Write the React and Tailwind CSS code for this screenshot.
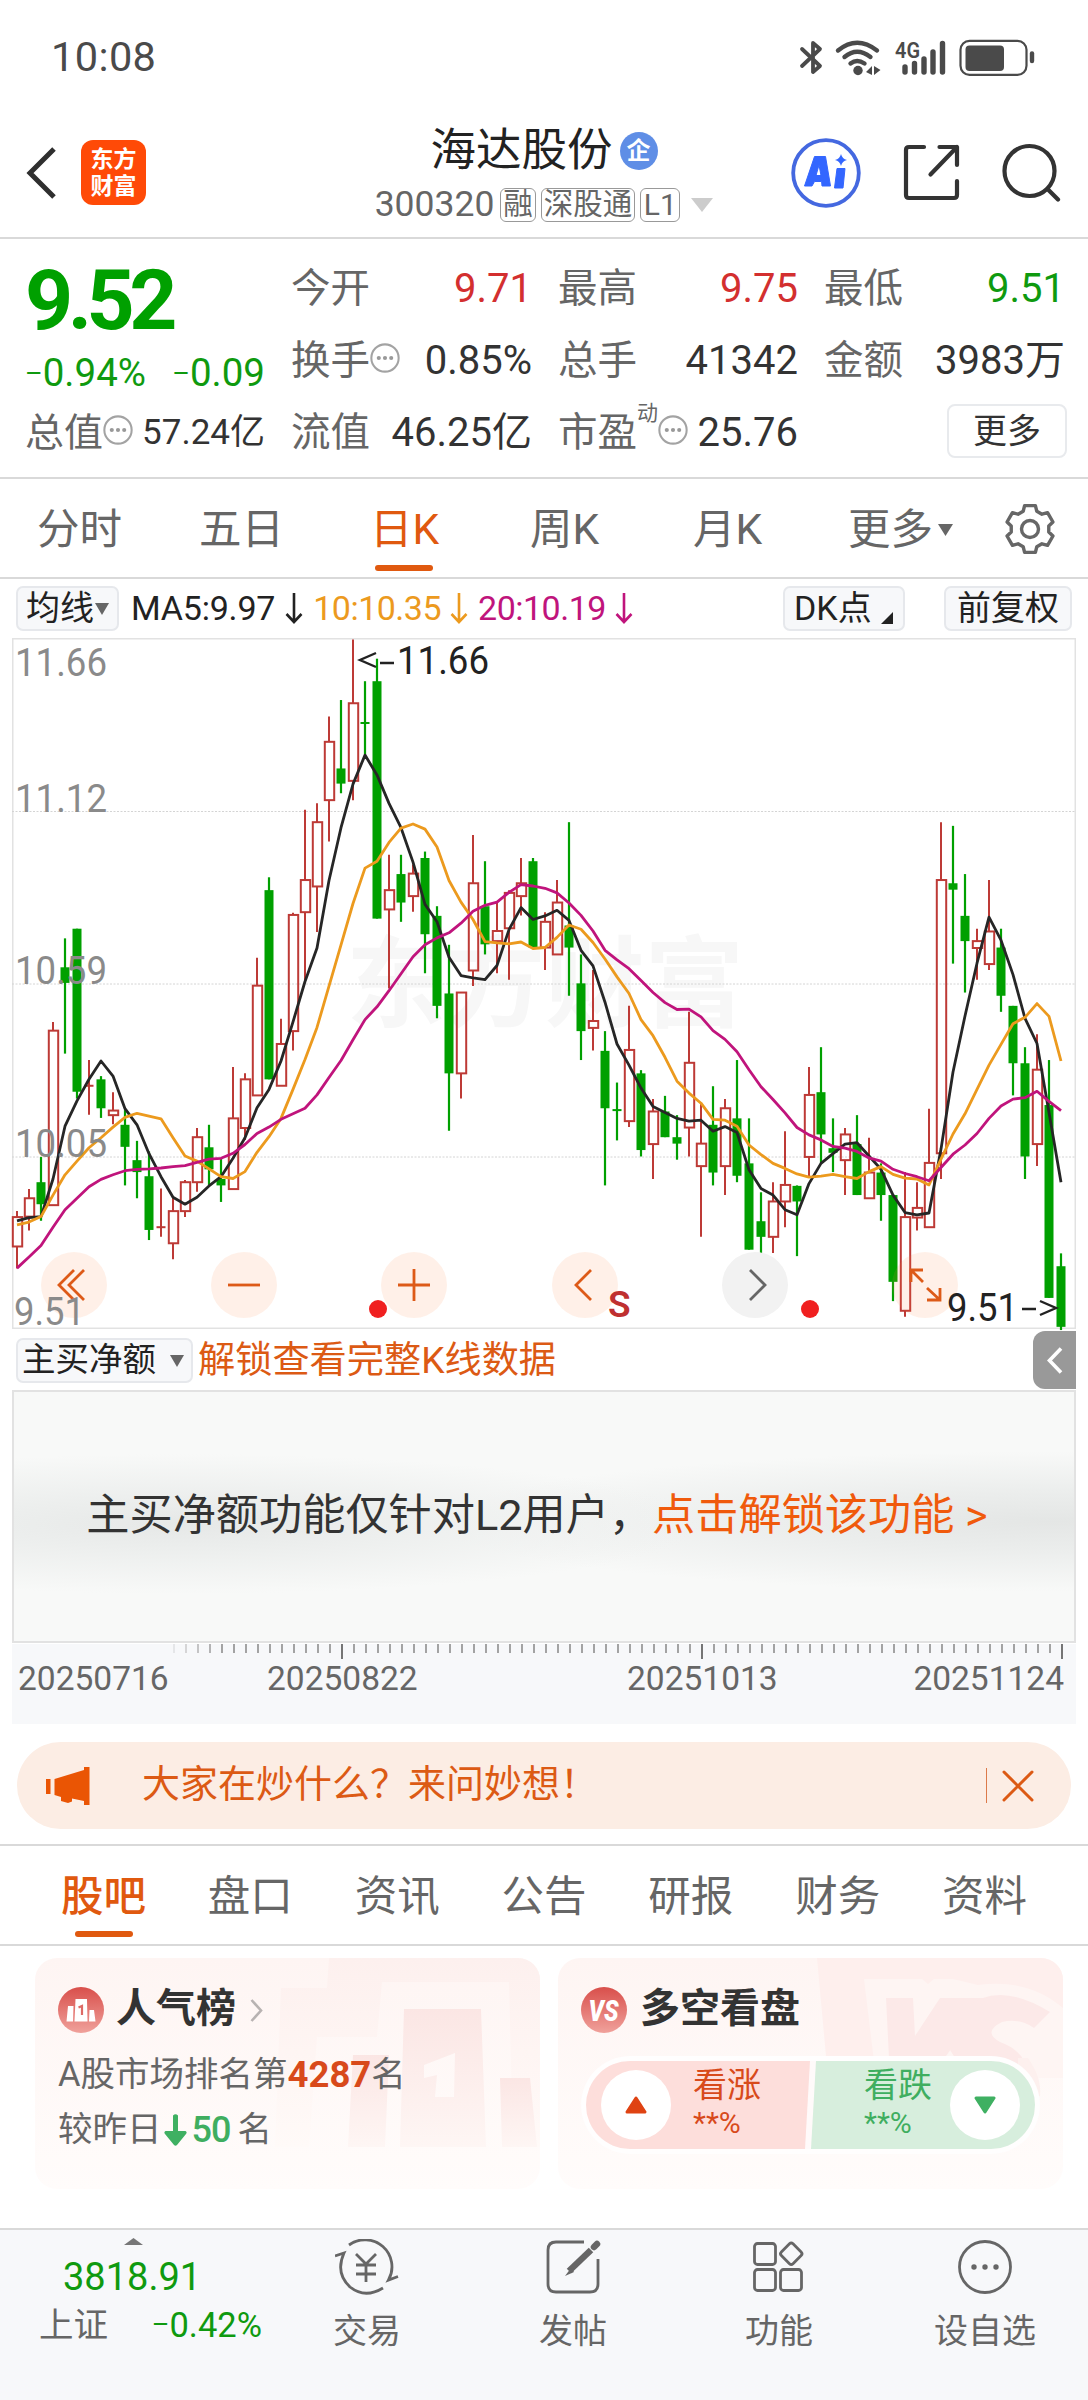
import React from 'react';

// [high, bodyTop, bodyBottom, low, direction], 1 = up, 0 = down
const candles = [
    [1265, 1278, 1342, 1390, 1], [1217, 1237, 1277, 1307, 1], [1147, 1202, 1250, 1286, 0], [853, 872, 1252, 1252, 1],
    [671, 734, 768, 922, 0], [650, 650, 1005, 1020, 0], [936, 992, 992, 1055, 1], [971, 978, 1041, 1062, 0],
    [1006, 1046, 1056, 1076, 1], [1045, 1077, 1125, 1209, 0], [1112, 1154, 1180, 1237, 0], [1135, 1189, 1306, 1328, 0],
    [1216, 1300, 1300, 1321, 1], [1235, 1265, 1335, 1370, 1], [1197, 1202, 1265, 1278, 1], [1084, 1104, 1202, 1223, 1],
    [1077, 1126, 1174, 1208, 0], [1150, 1195, 1209, 1245, 0], [951, 1063, 1217, 1217, 1], [965, 978, 1084, 1110, 1],
    [713, 774, 1013, 1013, 1], [538, 566, 978, 978, 0], [846, 901, 992, 992, 1], [615, 620, 873, 915, 1],
    [391, 544, 614, 765, 1], [377, 418, 558, 657, 1], [188, 243, 370, 460, 1], [152, 301, 334, 355, 0],
    [20, 159, 328, 370, 1], [111, 202, 202, 270, 0], [62, 111, 628, 628, 0], [489, 566, 608, 780, 1],
    [489, 531, 593, 635, 0], [510, 530, 579, 613, 1], [482, 496, 662, 747, 0], [601, 622, 818, 845, 0],
    [685, 791, 965, 1090, 0], [788, 789, 965, 1020, 1], [446, 551, 741, 775, 1], [503, 601, 684, 706, 0],
    [593, 655, 677, 747, 1], [566, 572, 649, 761, 1], [496, 551, 579, 621, 1], [496, 503, 691, 691, 0],
    [614, 635, 691, 740, 1], [544, 593, 706, 706, 1], [418, 643, 691, 796, 0], [706, 769, 873, 936, 0],
    [740, 851, 866, 915, 1], [873, 916, 1041, 1209, 0], [985, 1045, 1045, 1111, 0], [818, 914, 1069, 1082, 1],
    [958, 965, 1132, 1146, 0], [1021, 1048, 1119, 1195, 1], [1014, 1048, 1104, 1104, 0], [1056, 1104, 1118, 1153, 0],
    [831, 942, 1083, 1146, 1], [1029, 1118, 1167, 1321, 1], [993, 1077, 1181, 1209, 0], [1021, 1041, 1167, 1230, 1],
    [936, 1063, 1188, 1202, 0], [1063, 1161, 1349, 1349, 0], [1224, 1287, 1321, 1377, 0], [1202, 1244, 1321, 1356, 1],
    [1091, 1208, 1244, 1300, 1], [1209, 1210, 1244, 1363, 0], [951, 1012, 1147, 1193, 1], [908, 1006, 1098, 1161, 0],
    [1063, 1128, 1138, 1180, 0], [1084, 1098, 1154, 1230, 1], [1056, 1119, 1230, 1230, 0], [1105, 1181, 1237, 1237, 1],
    [1161, 1181, 1230, 1286, 0], [1230, 1230, 1419, 1461, 0], [1180, 1278, 1482, 1495, 1], [1202, 1258, 1279, 1307, 1],
    [1042, 1160, 1300, 1300, 1], [418, 544, 1139, 1195, 1], [426, 551, 565, 726, 0], [531, 622, 677, 789, 0],
    [650, 677, 692, 761, 1], [544, 656, 727, 740, 1], [650, 691, 796, 831, 0], [818, 818, 943, 1013, 0],
    [908, 943, 1146, 1195, 0], [880, 957, 1119, 1167, 1], [936, 1034, 1454, 1454, 0], [1357, 1385, 1517, 1524, 0],
];

const ma5 = [
    1286, 1279, 1277, 1195, 1080, 1025, 978, 938, 971, 1042, 1077, 1140, 1190, 1235, 1250, 1235, 1210, 1190, 1150, 1105, 1040, 1000,
    938, 853, 765, 692, 545, 430, 335, 272, 315, 377, 430, 505, 597, 635, 712, 752, 757, 761, 730, 652, 604, 630, 622, 610, 632, 697,
    731, 810, 901, 947, 997, 1037, 1050, 1063, 1069, 1067, 1091, 1081, 1094, 1175, 1216, 1230, 1262, 1273, 1205, 1161, 1140, 1119,
    1116, 1145, 1174, 1230, 1268, 1273, 1269, 1130, 962, 840, 725, 625, 675, 750, 845, 900, 1050, 1202,
];
const ma10 = [
    1295, 1289, 1277, 1230, 1186, 1156, 1127, 1105, 1082, 1061, 1052, 1058, 1064, 1105, 1145, 1156, 1173, 1190, 1194, 1179, 1137,
    1103, 1063, 1000, 935, 865, 775, 685, 595, 518, 503, 462, 431, 422, 433, 472, 545, 592, 630, 678, 681, 683, 679, 693, 691, 669,
    642, 651, 680, 716, 755, 791, 848, 883, 930, 982, 1008, 1030, 1065, 1067, 1080, 1121, 1142, 1161, 1172, 1184, 1191, 1189, 1185,
    1190, 1194, 1179, 1168, 1185, 1193, 1195, 1208, 1152, 1097, 1053, 1000, 947, 902, 857, 843, 813, 841, 938,
];
const ma20 = [
    1389, 1365, 1340, 1300, 1262, 1237, 1212, 1196, 1186, 1177, 1174, 1173, 1171, 1168, 1166, 1159, 1152, 1150, 1139, 1120, 1096,
    1082, 1065, 1053, 1041, 1012, 974, 937, 892, 848, 820, 785, 748, 711, 685, 670, 659, 638, 612, 599, 592, 571, 554, 557, 562, 572,
    594, 621, 655, 697, 718, 737, 763, 789, 811, 826, 825, 842, 872, 891, 918, 957, 994, 1022, 1051, 1083, 1099, 1110, 1124, 1128,
    1135, 1149, 1156, 1174, 1183, 1190, 1199, 1170, 1141, 1121, 1096, 1063, 1036, 1021, 1018, 1004, 1026, 1046,
];

const px = (i) => 5 + i * 12;
const py = (v) => (v - 18) * 0.4592 + 0.5;
const toPoints = (list) => list.map((v, i) => `${px(i)},${py(v).toFixed(1)}`).join(' ');

const StatusBar = () => (
    <div className="flex h-[115px] items-center justify-between pl-[51px] pr-[52px] text-[#4a4a4a]">
        <span className="text-[41.5px] tracking-[0.4px]">10:08</span>
        <svg className="overflow-visible" width="236" height="38" viewBox="0 0 236 38" fill="none" stroke="#4a4a4a">
            <path d="M2 10L20 27L13 33V4L20 10L2 27" strokeWidth="3.800" strokeLinecap="round" strokeLinejoin="round" />
            <g strokeWidth="4.400" strokeLinecap="round">
                <path d="M38 11.500Q57 -4 77 11.500" />
                <path d="M44.500 18Q57 7.500 70.500 18" />
                <path d="M50.500 24.500Q57 19.500 64.500 24.500" />
            </g>
            <circle cx="58" cy="31.500" r="4.700" fill="#4a4a4a" stroke="none" />
            <path d="M72 27V36L66 33ZM74 27L80.500 31L74 36Z" fill="#4a4a4a" stroke="none" />
            <g strokeWidth="5.400" strokeLinecap="round">
                <path d="M105 28V33M114.500 24.500V33M124 20V33M133 13V33M142.500 4.500V33" />
            </g>
            <text x="95" y="19" fontSize="22" fontWeight="600" fill="#4a4a4a" stroke="none" textLength="25" lengthAdjust="spacingAndGlyphs">4G</text>
            <rect x="160.500" y="1.800" width="66" height="34" rx="9" strokeWidth="2.200" />
            <rect x="165.500" y="6.500" width="38.500" height="25.500" rx="4" fill="#4a4a4a" stroke="none" />
            <path d="M232 14.500V22" strokeWidth="4.400" strokeLinecap="round" />
        </svg>
    </div>
);

const Header = () => (
    <div className="grid h-[124px] grid-cols-[300px_1fr_300px] border-b-2 border-[#d9d9d9]">
        <div className="flex h-[115px] items-center gap-[25px] pl-[26px]">
            <svg width="30" height="52" viewBox="0 0 30 52" fill="none" stroke="#2f2f2f" strokeWidth="5">
                <path d="M28 2L4 26L28 50" />
            </svg>
            <div className="flex h-[65px] w-[65px] flex-col items-center justify-center rounded-[12px] bg-[#ff4a07] text-[23px] leading-[27px] font-bold text-white">
                <span>东方</span>
                <span>财富</span>
            </div>
        </div>
        <div className="flex flex-col items-center pt-[11px]">
            <div className="flex h-[50px] items-center gap-[7px]">
                <span className="text-[45.5px] text-[#222]">海达股份</span>
                <span className="flex h-[38px] w-[38px] items-center justify-center rounded-full bg-[#5f8ee6] text-[24px] font-bold text-white">企</span>
            </div>
            <div className="mt-[11px] flex h-[36px] items-center text-[#666]">
                <span className="text-[35.5px]">300320</span>
                <span className="ml-[6px] flex h-[34px] items-center rounded-[6px] border-[1.5px] border-[#999] px-[2px] text-[29.5px] leading-none">融</span>
                <span className="ml-[5px] flex h-[34px] items-center rounded-[6px] border-[1.5px] border-[#999] px-[2px] text-[29.5px] leading-none">深股通</span>
                <span className="ml-[5px] flex h-[34px] w-[40px] items-center justify-center rounded-[6px] border-[1.5px] border-[#999] text-[30px] leading-none">L1</span>
                <svg className="ml-[11px]" width="22" height="14" viewBox="0 0 22 14">
                    <path d="M0 0H22L11 14Z" fill="#ccc" />
                </svg>
            </div>
        </div>
        <div className="flex h-[115px] items-center justify-end gap-[42px] pr-[27px]">
            <svg width="70" height="70" viewBox="0 0 70 70">
                <circle cx="35" cy="35" r="32.800" fill="none" stroke="#4468e0" strokeWidth="3.800" />
                <g fill="#3366ff">
                    <path fillRule="evenodd" d="M23.500 18.500H34.500L39.500 48H31L30.600 43.500H23.500L21 48H13.500ZM28 27L25 37.500H30Z" strokeLinejoin="round" stroke="#3366ff" strokeWidth="1" />
                    <path d="M46 30.500H54L52 50H43.500Z" strokeLinejoin="round" stroke="#3366ff" strokeWidth="1" />
                    <path d="M50 16Q51.200 20.800 56 22Q51.200 23.200 50 28Q48.800 23.200 44 22Q48.800 20.800 50 16Z" />
                </g>
            </svg>
            <svg width="57" height="57" viewBox="0 0 57 57" fill="none" stroke="#333" strokeWidth="4.200" strokeLinecap="round" strokeLinejoin="round">
                <path d="M21 3H6Q3 3 3 6V51Q3 54 6 54H51Q54 54 54 51V37" />
                <path d="M36.500 3H54V21M54 3L27.500 30.500" />
            </svg>
            <svg width="59" height="59" viewBox="0 0 59 59" fill="none" stroke="#333" strokeWidth="4.200" strokeLinecap="round">
                <circle cx="27.500" cy="28" r="25" />
                <path d="M45.500 46L56 56.500" />
            </svg>
        </div>
    </div>
);

const DotsIcon = () => (
    <svg className="-mt-[6px] shrink-0" width="30" height="30" viewBox="0 0 29 29">
        <circle cx="14.500" cy="14.500" r="13.200" fill="none" stroke="#a3a3a3" strokeWidth="2" />
        <g fill="#999">
            <circle cx="8.500" cy="14.500" r="2" />
            <circle cx="14.500" cy="14.500" r="2" />
            <circle cx="20.500" cy="14.500" r="2" />
        </g>
    </svg>
);

const Stat = ({ label, value, tone = 'text-[#333]', dots, sup }) => (
    <div className="flex h-[72px] items-center">
        <span className="text-[39.5px] text-[#666]">{label}</span>
        {sup && <span className="-mt-[38px] text-[21px] text-[#666]">{sup}</span>}
        {dots && <DotsIcon />}
        <span className={`ml-auto text-[40px] ${tone}`}>{value}</span>
    </div>
);

const Negative = ({ children }) => (
    <span><span className="text-[27px] align-[3px]">–</span>{children}</span>
);

const Quote = () => (
    <div className="grid h-[240px] grid-cols-[240px_241px_240px_241px] gap-x-[26px] border-b-2 border-[#d9d9d9] pl-[25px] pt-[14px] whitespace-nowrap">
        <div>
            <div className="h-[96px] text-[84px] leading-[96px] font-bold tracking-[-5.5px] text-[#00a000]">9.52</div>
            <div className="flex h-[48px] items-center justify-between text-[38.5px] text-[#0f9a0f]">
                <Negative>0.94%</Negative>
                <Negative>0.09</Negative>
            </div>
            <div className="flex h-[72px] items-center">
                <span className="text-[39px] text-[#666]">总值</span>
                <DotsIcon />
                <span className="ml-auto text-[35px] text-[#333]">57.24亿</span>
            </div>
        </div>
        <div>
            <Stat label="今开" value="9.71" tone="text-[#d32f2f]" />
            <Stat label="换手" value="0.85%" dots />
            <Stat label="流值" value="46.25亿" />
        </div>
        <div>
            <Stat label="最高" value="9.75" tone="text-[#d32f2f]" />
            <Stat label="总手" value="41342" />
            <Stat label="市盈" value="25.76" sup="动" dots />
        </div>
        <div>
            <Stat label="最低" value="9.51" tone="text-[#0f9a0f]" />
            <Stat label="金额" value="3983万" />
            <div className="flex h-[68px] items-center justify-end">
                <button className="-mr-[2px] flex h-[54px] w-[120px] items-center justify-center rounded-[8px] border-2 border-[#e8eaed] text-[34px] text-[#333]">更多</button>
            </div>
        </div>
    </div>
);

// six-tooth cog outline
const gearPath = Array.from({ length: 6 }, (_, k) => {
    const pt = (deg, r) => {
        const a = ((k * 60 + deg - 90) * Math.PI) / 180;
        return `${(26 + r * Math.cos(a)).toFixed(2)} ${(26 + r * Math.sin(a)).toFixed(2)}`;
    };
    return `${k ? 'L' : 'M'}${pt(-21, 19)}L${pt(-13, 24)}L${pt(13, 24)}L${pt(21, 19)}`;
}).join('') + 'Z';

const PeriodTabs = () => (
    <div className="flex h-[100px] items-center border-b-2 border-[#d9d9d9] pt-[4px] pl-[37px] text-[42.5px] text-[#666] whitespace-nowrap">
        <span className="w-[162px]">分时</span>
        <span className="w-[171px]">五日</span>
        <span className="relative w-[160px] text-[#e0590f]">
            日K
            <i className="absolute -bottom-[9px] left-[5px] h-[6px] w-[58px] rounded-full bg-[#e0590f]" />
        </span>
        <span className="w-[163px]">周K</span>
        <span className="w-[155px]">月K</span>
        <span>更多</span>
        <svg className="ml-[5px]" width="15" height="12" viewBox="0 0 15 12"><path d="M0 0H15L7.500 12Z" fill="#666" /></svg>
        <svg className="-mt-[2px] ml-[51px]" width="52" height="52" viewBox="0 0 52 52" fill="none" stroke="#666" strokeWidth="3.400" strokeLinejoin="round">
            <path d={gearPath} />
            <circle cx="26" cy="26" r="8.500" />
        </svg>
    </div>
);

const DownArrow = ({ color }) => (
    <svg width="18" height="31" viewBox="0 0 18 31" fill="none" stroke={color} strokeWidth="2.600">
        <path d="M9 0V29M1.500 21L9 29L16.500 21" />
    </svg>
);

const IndicatorRow = () => (
    <div className="flex h-[59px] items-center pl-[16px] pr-[16px] text-[34px] text-[#222] whitespace-nowrap">
        <button className="flex h-[45px] w-[103px] items-center justify-center gap-px rounded-[7px] border-2 border-[#e6e8ec] bg-[#f7f8fa]">
            均线
            <svg width="14" height="12" viewBox="0 0 14 12"><path d="M0 0H14L7 12Z" fill="#666" /></svg>
        </button>
        <span className="ml-[12px] mr-[10px] tracking-[-0.2px]">MA5:9.97</span>
        <DownArrow color="#222" />
        <span className="ml-[10px] mr-[9px] tracking-[-0.5px] text-[#ec9a1e]">10:10.35</span>
        <DownArrow color="#ec9a1e" />
        <span className="ml-[10px] mr-[9px] tracking-[-0.5px] text-[#c0147c]">20:10.19</span>
        <DownArrow color="#c0147c" />
        <button className="ml-auto flex h-[45px] w-[122px] items-center rounded-[7px] border-2 border-[#e6e8ec] bg-[#f7f8fa] pl-[9px]">
            DK点
            <svg className="mt-[18px] ml-[9px]" width="12" height="12" viewBox="0 0 12 12"><path d="M12 0V12H0Z" fill="#222" /></svg>
        </button>
        <button className="ml-[39px] flex h-[45px] w-[128px] items-center justify-center rounded-[7px] border-2 border-[#e6e8ec] bg-[#f7f8fa]">前复权</button>
    </div>
);

const axisLabels = [
    { text: '11.66', y: 38, w: 92 },
    { text: '11.12', y: 174, w: 92 },
    { text: '10.59', y: 346, w: 92 },
    { text: '10.05', y: 519, w: 92 },
];

const KLineChart = () => (
    <svg className="ml-[12px] block shrink-0 overflow-visible" width="1064" height="691" viewBox="0 0 1064 691">
        <rect x="0.750" y="0.750" width="1062.500" height="689.500" fill="none" stroke="#e2e2e2" strokeWidth="1.500" />
        <text x="334" y="381" fontSize="99" fontWeight="700" fill="#f7f7f7" textLength="398" lengthAdjust="spacingAndGlyphs">东方财富</text>
        {[173.500, 346, 519].map((y) => (
            <line key={y} x1="0" x2="1063" y1={y} y2={y} stroke="#d4d4d4" strokeWidth="1" strokeDasharray="2 1.500" />
        ))}
        {candles.map(([h, t, b, l, up], i) => {
            const x = px(i);
            if (!up) {
                return (
                    <g key={i} fill="#00a000">
                        <rect x={x - 1.1} y={py(h)} width="2.200" height={py(l) - py(h)} />
                        <rect x={x - 4.5} y={py(t) - (t === b ? 1 : 0)} width="9" height={Math.max(py(b) - py(t), 2)} />
                    </g>
                );
            }
            return (
                <g key={i} fill="none" stroke="#bd3a36" strokeWidth="2">
                    <path d={`M${x} ${py(h)}V${py(t)}M${x} ${py(b)}V${py(l)}`} />
                    {t === b
                        ? <path d={`M${x - 4.5} ${py(t)}H${x + 4.5}`} />
                        : <rect x={x - 4.2} y={py(t)} width="9.400" height={py(b) - py(t)} />}
                </g>
            );
        })}
        <g fill="none" strokeWidth="2.800" strokeLinejoin="round">
            <polyline points={toPoints(ma5)} stroke="#262626" />
            <polyline points={toPoints(ma10)} stroke="#ec9a1e" />
            <polyline points={toPoints(ma20)} stroke="#c0147c" />
        </g>
        <g fill="#ff8040" fillOpacity="0.120">
            {[62, 232, 402, 573, 913].map((x) => <circle key={x} cx={x} cy="647" r="33" />)}
        </g>
        <circle cx="743" cy="647" r="33" fill="#f2f2f2" />
        <g fill="none" stroke="#dd5a18" strokeWidth="2.800">
            <path d="M62 632L47 647L62 662M72 632L57 647L72 662" />
            <path d="M216 647H248" />
            <path d="M386 647H418M402 631V663" />
            <path d="M579 632L564 647L579 662" />
            <path d="M911 644L899 632M899 644V632H911M915 650L928 662M915 662H928V650" />
        </g>
        <path d="M738 632L753 647L738 662" fill="none" stroke="#666" strokeWidth="2.800" />
        <circle cx="366" cy="671" r="9" fill="#f02020" />
        <circle cx="798" cy="671" r="9" fill="#f02020" />
        <text x="596" y="679" fontSize="37" fontWeight="600" fill="#bf3030">S</text>
        <g fontSize="39" fill="#8a8a8a">
            {axisLabels.map((a) => <text key={a.text} x="3" y={a.y} textLength={a.w} lengthAdjust="spacingAndGlyphs">{a.text}</text>)}
            <text x="2" y="687" textLength="71" lengthAdjust="spacingAndGlyphs">9.51</text>
        </g>
        <g fontSize="39" fill="#222">
            <text x="385" y="36" textLength="92" lengthAdjust="spacingAndGlyphs">11.66</text>
            <text x="935" y="683" textLength="71" lengthAdjust="spacingAndGlyphs">9.51</text>
        </g>
        <g fill="none" stroke="#222" strokeWidth="2.400">
            <path d="M364 15L348 22L364 29M368 25H382" />
            <path d="M1010 671H1024M1028 663L1044 670L1028 677" />
        </g>
    </svg>
);

const SubChartBar = () => (
    <div className="flex h-[61px] items-start pl-[16px] pr-[12px] pt-[2px] whitespace-nowrap">
        <button className="mt-[7px] flex h-[45px] w-[177px] items-center rounded-[7px] border-2 border-[#e6e8ec] bg-[#f7f8fa] pl-[4px] text-[33.5px] text-[#222]">
            主买净额
            <svg className="ml-[14px]" width="14" height="12" viewBox="0 0 14 12"><path d="M0 0H14L7 12Z" fill="#666" /></svg>
        </button>
        <span className="ml-[5px] flex h-[60px] items-center text-[37.2px] text-[#dc5a14]">解锁查看完整K线数据</span>
        <button className="ml-auto flex h-[58px] w-[43px] items-center justify-center rounded-l-[12px] bg-[#999]">
            <svg width="16" height="27" viewBox="0 0 16 27" fill="none" stroke="#fff" strokeWidth="3.600"><path d="M14 1.500L2.500 13.500L14 25.500" /></svg>
        </button>
    </div>
);

const LockedPanel = () => (
    <div className="mx-[12px] flex h-[253px] items-center justify-center border-2 border-[#e2e2e2] bg-[#f8f9f8] bg-[radial-gradient(ellipse_520px_70px_at_16%_53%,#e6e8e7_0%,#eceeed_35%,transparent_100%),radial-gradient(ellipse_620px_70px_at_98%_52%,#e4e6e5_0%,#ebedec_40%,transparent_100%)] pr-[14px] text-[43.2px] whitespace-nowrap">
        <span className="text-[#333]">主买净额功能仅针对L2用户，</span>
        <span className="text-[#f05a0c]">点击解锁该功能 &gt;</span>
    </div>
);

const TimeAxis = () => (
    <div className="mx-[12px] mt-px h-[80px] bg-[#f7f8fa]">
        <svg className="block" width="1064" height="16" viewBox="0 0 1064 16">
            {Array.from({ length: 75 }, (_, k) => {
                const i = k + 13;
                const major = i === 27 || i === 57 || i === 87;
                return (
                    <line key={i} x1={px(i) + 1} x2={px(i) + 1} y1="0" y2={major ? 15 : 9} stroke={major ? '#666' : '#999'} strokeWidth="1.800" opacity={Math.min(1, (k + 1) / 5)} />
                );
            })}
        </svg>
        <div className="flex h-[38px] items-center pl-[6px] pr-[12px] text-[33.5px] text-[#666]">
            <span className="w-[249px]">20250716</span>
            <span className="w-[360px]">20250822</span>
            <span>20251013</span>
            <span className="ml-auto">20251124</span>
        </div>
    </div>
);

const Banner = () => (
    <div className="mx-[17px] mt-[18px] flex h-[87px] items-center rounded-[44px] bg-[#fcede4] pl-[29px] pr-[37px] text-[#dc5a14]">
        <svg width="44" height="38" viewBox="0 0 44 38" fill="#ea5504">
            <rect x="0" y="12" width="4.500" height="15" />
            <path d="M8.500 12L38 3V0H43.500V38H38V34L26 31.500V34.500L22 36L15 34V30L8.500 28Z" />
        </svg>
        <span className="-mt-[2px] ml-[52px] text-[38px]">大家在炒什么？来问妙想！</span>
        <i className="ml-auto h-[35px] w-[1.5px] bg-[#dc7a4a]" />
        <svg className="ml-[15px]" width="32" height="32" viewBox="0 0 32 32" stroke="#dc5a14" strokeWidth="3" strokeLinecap="round">
            <path d="M2 2L30 30M30 2L2 30" />
        </svg>
    </div>
);

const sections = ['股吧', '盘口', '资讯', '公告', '研报', '财务', '资料'];

const SectionTabs = () => (
    <div className="mt-[15px] flex h-[102px] items-center justify-between border-y-2 border-[#d9d9d9] px-[61px] pt-[4px] text-[42.5px] text-[#666]">
        {sections.map((name, i) => (
            <span key={name} className={i === 0 ? 'relative font-medium text-[#e0590f]' : ''}>
                {name}
                {i === 0 && <i className="absolute -bottom-[8px] left-[14px] h-[6px] w-[58px] rounded-full bg-[#e0590f]" />}
            </span>
        ))}
    </div>
);

const PopularityCard = () => (
    <div className="relative h-[231px] w-[505px] shrink-0 overflow-hidden rounded-[22px] bg-linear-to-b from-[#fef5f3] to-[#fffcfb] pl-[23px] text-[34.5px] text-[#666] whitespace-nowrap">
        <svg className="absolute inset-0" width="505" height="231" viewBox="0 0 505 231">
            <defs>
                <linearGradient id="podium" x1="0" y1="0" x2="0" y2="1">
                    <stop offset="0" stopColor="#fbe6e4" />
                    <stop offset="1" stopColor="#fef6f4" />
                </linearGradient>
                <linearGradient id="halo" x1="0" y1="0" x2="0" y2="1">
                    <stop offset="0" stopColor="#fdf0ee" />
                    <stop offset="1" stopColor="#fffaf8" />
                </linearGradient>
            </defs>
            <path d="M294 0H505V189H478L474 24H347L342 79H282L274 189H240L246 30H292Z" fill="url(#halo)" />
            <g fill="url(#podium)">
                <path d="M318 97H354L350 189H313Z" />
                <path fillRule="evenodd" d="M369 51H446L451 189H365ZM420 95L389 107V120L402 117L400 139H419Z" />
                <path d="M465 120H495L502 189H467Z" />
            </g>
        </svg>
        <div className="relative mt-[29px] flex h-[46px] items-center">
            <svg width="46" height="46" viewBox="0 0 46 46">
                <defs>
                    <linearGradient id="badgeRed" x1="0" y1="0" x2="0" y2="1">
                        <stop offset="0" stopColor="#d94f4b" />
                        <stop offset="1" stopColor="#f0a19b" />
                    </linearGradient>
                </defs>
                <circle cx="23" cy="23" r="23" fill="url(#badgeRed)" />
                <path d="M10 19H15.500L15 34.500H8.500ZM17.500 12H29L29.500 34.500H16.500ZM31.500 23H36L37.500 34.500H31Z" fill="#fff" />
                <path d="M20.500 20.500L24 19V28" fill="none" stroke="#dd6a65" strokeWidth="2.200" />
            </svg>
            <span className="-mt-[2px] ml-[12px] text-[40px] font-bold text-[#333]">人气榜</span>
            <svg className="ml-[14px]" width="13" height="23" viewBox="0 0 13 23" fill="none" stroke="#b8b3b2" strokeWidth="2.600"><path d="M1.500 1L11 11.500L1.500 22" /></svg>
        </div>
        <div className="relative mt-[17px] flex h-[50px] items-center">
            A股市场排名第<b className="text-[36.5px] text-[#d84a1b]">4287</b>名
        </div>
        <div className="relative mt-[5px] flex h-[50px] items-center">
            较昨日
            <svg className="ml-[2px]" width="23" height="32" viewBox="0 0 23 32" fill="#3fb062">
                <path d="M9 1.500Q11.500 -1 14 1.500V17H21.500Q23.500 18 22 20L13 31Q11.500 32.500 10 31L1 20Q-0.500 18 1.500 17H9Z" />
            </svg>
            <span className="ml-[5px] mr-[7px] text-[36px] font-medium text-[#3fae60] tracking-[-1px]">50</span>名
        </div>
    </div>
);

const SentimentCard = () => (
    <div className="relative h-[231px] w-[505px] shrink-0 overflow-hidden rounded-[22px] bg-linear-to-b from-[#fef5f3] to-[#fffcfb] pl-[23px] whitespace-nowrap">
        <svg className="absolute inset-0" width="505" height="231" viewBox="0 0 505 231">
            <path d="M259 0H505V120H270Z" fill="#feefed" />
            <path d="M306 21H364L370 26L376 21H395L420 27Q470 20 505 50V120H318Z" fill="#fef5f3" />
            <g fill="#fce9e8">
                <path d="M328 40H355L357 78L382 40H430L372 120H332Z" />
                <path d="M492 54Q440 22 408 50L392 92L410 120H470Q470 94 442 84Q424 74 444 64Q462 60 476 70Z" />
            </g>
            <path d="M470 100Q484 120 482 138L460 150V100Z" fill="#fdf0ee" />
        </svg>
        <div className="relative mt-[29px] flex h-[46px] items-center">
            <svg width="46" height="46" viewBox="0 0 46 46">
                <circle cx="23" cy="23" r="23" fill="url(#badgeRed)" />
                <text x="7.500" y="34" fontSize="29" fontWeight="900" fontStyle="italic" fill="#fff" textLength="30" lengthAdjust="spacingAndGlyphs">VS</text>
            </svg>
            <span className="-mt-[2px] ml-[13px] text-[40px] font-bold text-[#333]">多空看盘</span>
        </div>
        <div className="relative mt-[23px] flex h-[98px] w-[459px] items-center overflow-hidden rounded-full border-[5px] border-white/70 bg-[#fffafa] text-[34px] leading-[38px]">
            <svg className="absolute inset-0" width="449" height="88" viewBox="0 0 449 88">
                <path d="M0 0H224L219 88H0Z" fill="#fddedb" />
                <path d="M230 0H449V88H225Z" fill="#d7eedd" />
            </svg>
            <div className="relative ml-[15px] flex h-[70px] w-[70px] items-center justify-center rounded-full bg-white">
                <svg width="22" height="18" viewBox="0 0 22 18" fill="#df4313" stroke="#df4313" strokeWidth="3" strokeLinejoin="round"><path d="M2 16L11 2L20 16Z" /></svg>
            </div>
            <div className="relative ml-[22px] flex h-[82px] w-[171px] flex-col text-[#d84a1b]">
                <span className="h-[43px] leading-[43px]">看涨</span>
                <span className="text-[30px] leading-[32px]">**%</span>
            </div>
            <div className="relative flex h-[82px] w-[86px] flex-col text-[#3fae60]">
                <span className="h-[43px] leading-[43px]">看跌</span>
                <span className="text-[30px] leading-[32px]">**%</span>
            </div>
            <div className="relative flex h-[70px] w-[70px] items-center justify-center rounded-full bg-white">
                <svg width="22" height="18" viewBox="0 0 22 18" fill="#3fb062" stroke="#3fb062" strokeWidth="3" strokeLinejoin="round"><path d="M2 2L11 16L20 2Z" /></svg>
            </div>
        </div>
    </div>
);

const NavItem = ({ label, children }) => (
    <div className="flex w-[206px] flex-col items-center pt-[9px]">
        <svg width="64" height="58" viewBox="0 0 64 58" fill="none" stroke="#666" strokeWidth="2.800">{children}</svg>
        <span className="mt-[10px] text-[34px] leading-[48px] text-[#666]">{label}</span>
    </div>
);

const BottomNav = () => (
    <div className="flex h-[172px] border-t-2 border-[#d9d9d9] bg-[#f7f8fa] whitespace-nowrap">
        <div className="w-[264px] pt-[8px]">
            <svg className="ml-[124px] block" width="19" height="7" viewBox="0 0 19 7"><path d="M9.500 0L19 7H0Z" fill="#777" /></svg>
            <div className="ml-[63px] mt-[8px] text-[38px] leading-[48px] text-[#0f9a0f]">3818.91</div>
            <div className="mt-px flex h-[48px] items-center justify-between pl-[39px] pr-[2px] text-[34.5px] text-[#666]">
                上证<span className="text-[#0f9a0f]"><Negative>0.42%</Negative></span>
            </div>
        </div>
        <NavItem label="交易">
            <path d="M15 6A27 27 0 0 1 54.500 41L64 37.500" transform="translate(-1 0)" />
            <path d="M0 17L9 14Q0 34 15 48Q30 60 48 49" />
            <path d="M21 15L31 25L41 15M31 25V43M21 26H41M21 35H41" />
        </NavItem>
        <NavItem label="发帖">
            <path d="M43 3H15Q7 3 7 11V45Q7 53 15 53H49Q57 53 57 45V20" />
            <path d="M50 11L28 32" strokeWidth="6.500" />
            <path d="M30 29L24 37L33 33Z" fill="#666" stroke="none" />
            <path d="M53 8L56 5" strokeWidth="6.500" strokeLinecap="round" />
        </NavItem>
        <NavItem label="功能">
            <rect x="7.500" y="4.500" width="21" height="21" rx="3" />
            <rect x="7.500" y="30.500" width="21" height="21" rx="3" />
            <rect x="33.500" y="30.500" width="21" height="21" rx="3" />
            <rect x="36" y="6.500" width="16.500" height="16.500" rx="2.500" transform="rotate(45 44.250 14.750)" />
        </NavItem>
        <NavItem label="设自选">
            <circle cx="32" cy="28" r="25.500" />
            <g fill="#666" stroke="none">
                <circle cx="21" cy="28" r="2.700" />
                <circle cx="32" cy="28" r="2.700" />
                <circle cx="43" cy="28" r="2.700" />
            </g>
        </NavItem>
    </div>
);

const App = () => {
    return (
        <div className="flex h-[2400px] w-[1088px] flex-col overflow-hidden bg-white font-[Roboto,'Noto_Sans_CJK_SC',sans-serif]">
            <StatusBar />
            <Header />
            <Quote />
            <PeriodTabs />
            <IndicatorRow />
            <KLineChart />
            <SubChartBar />
            <LockedPanel />
            <TimeAxis />
            <Banner />
            <SectionTabs />
            <div className="mt-[12px] flex gap-[18px] pl-[35px]">
                <PopularityCard />
                <SentimentCard />
            </div>
            <div className="flex-1" />
            <BottomNav />
        </div>
    );
};

export default App;
